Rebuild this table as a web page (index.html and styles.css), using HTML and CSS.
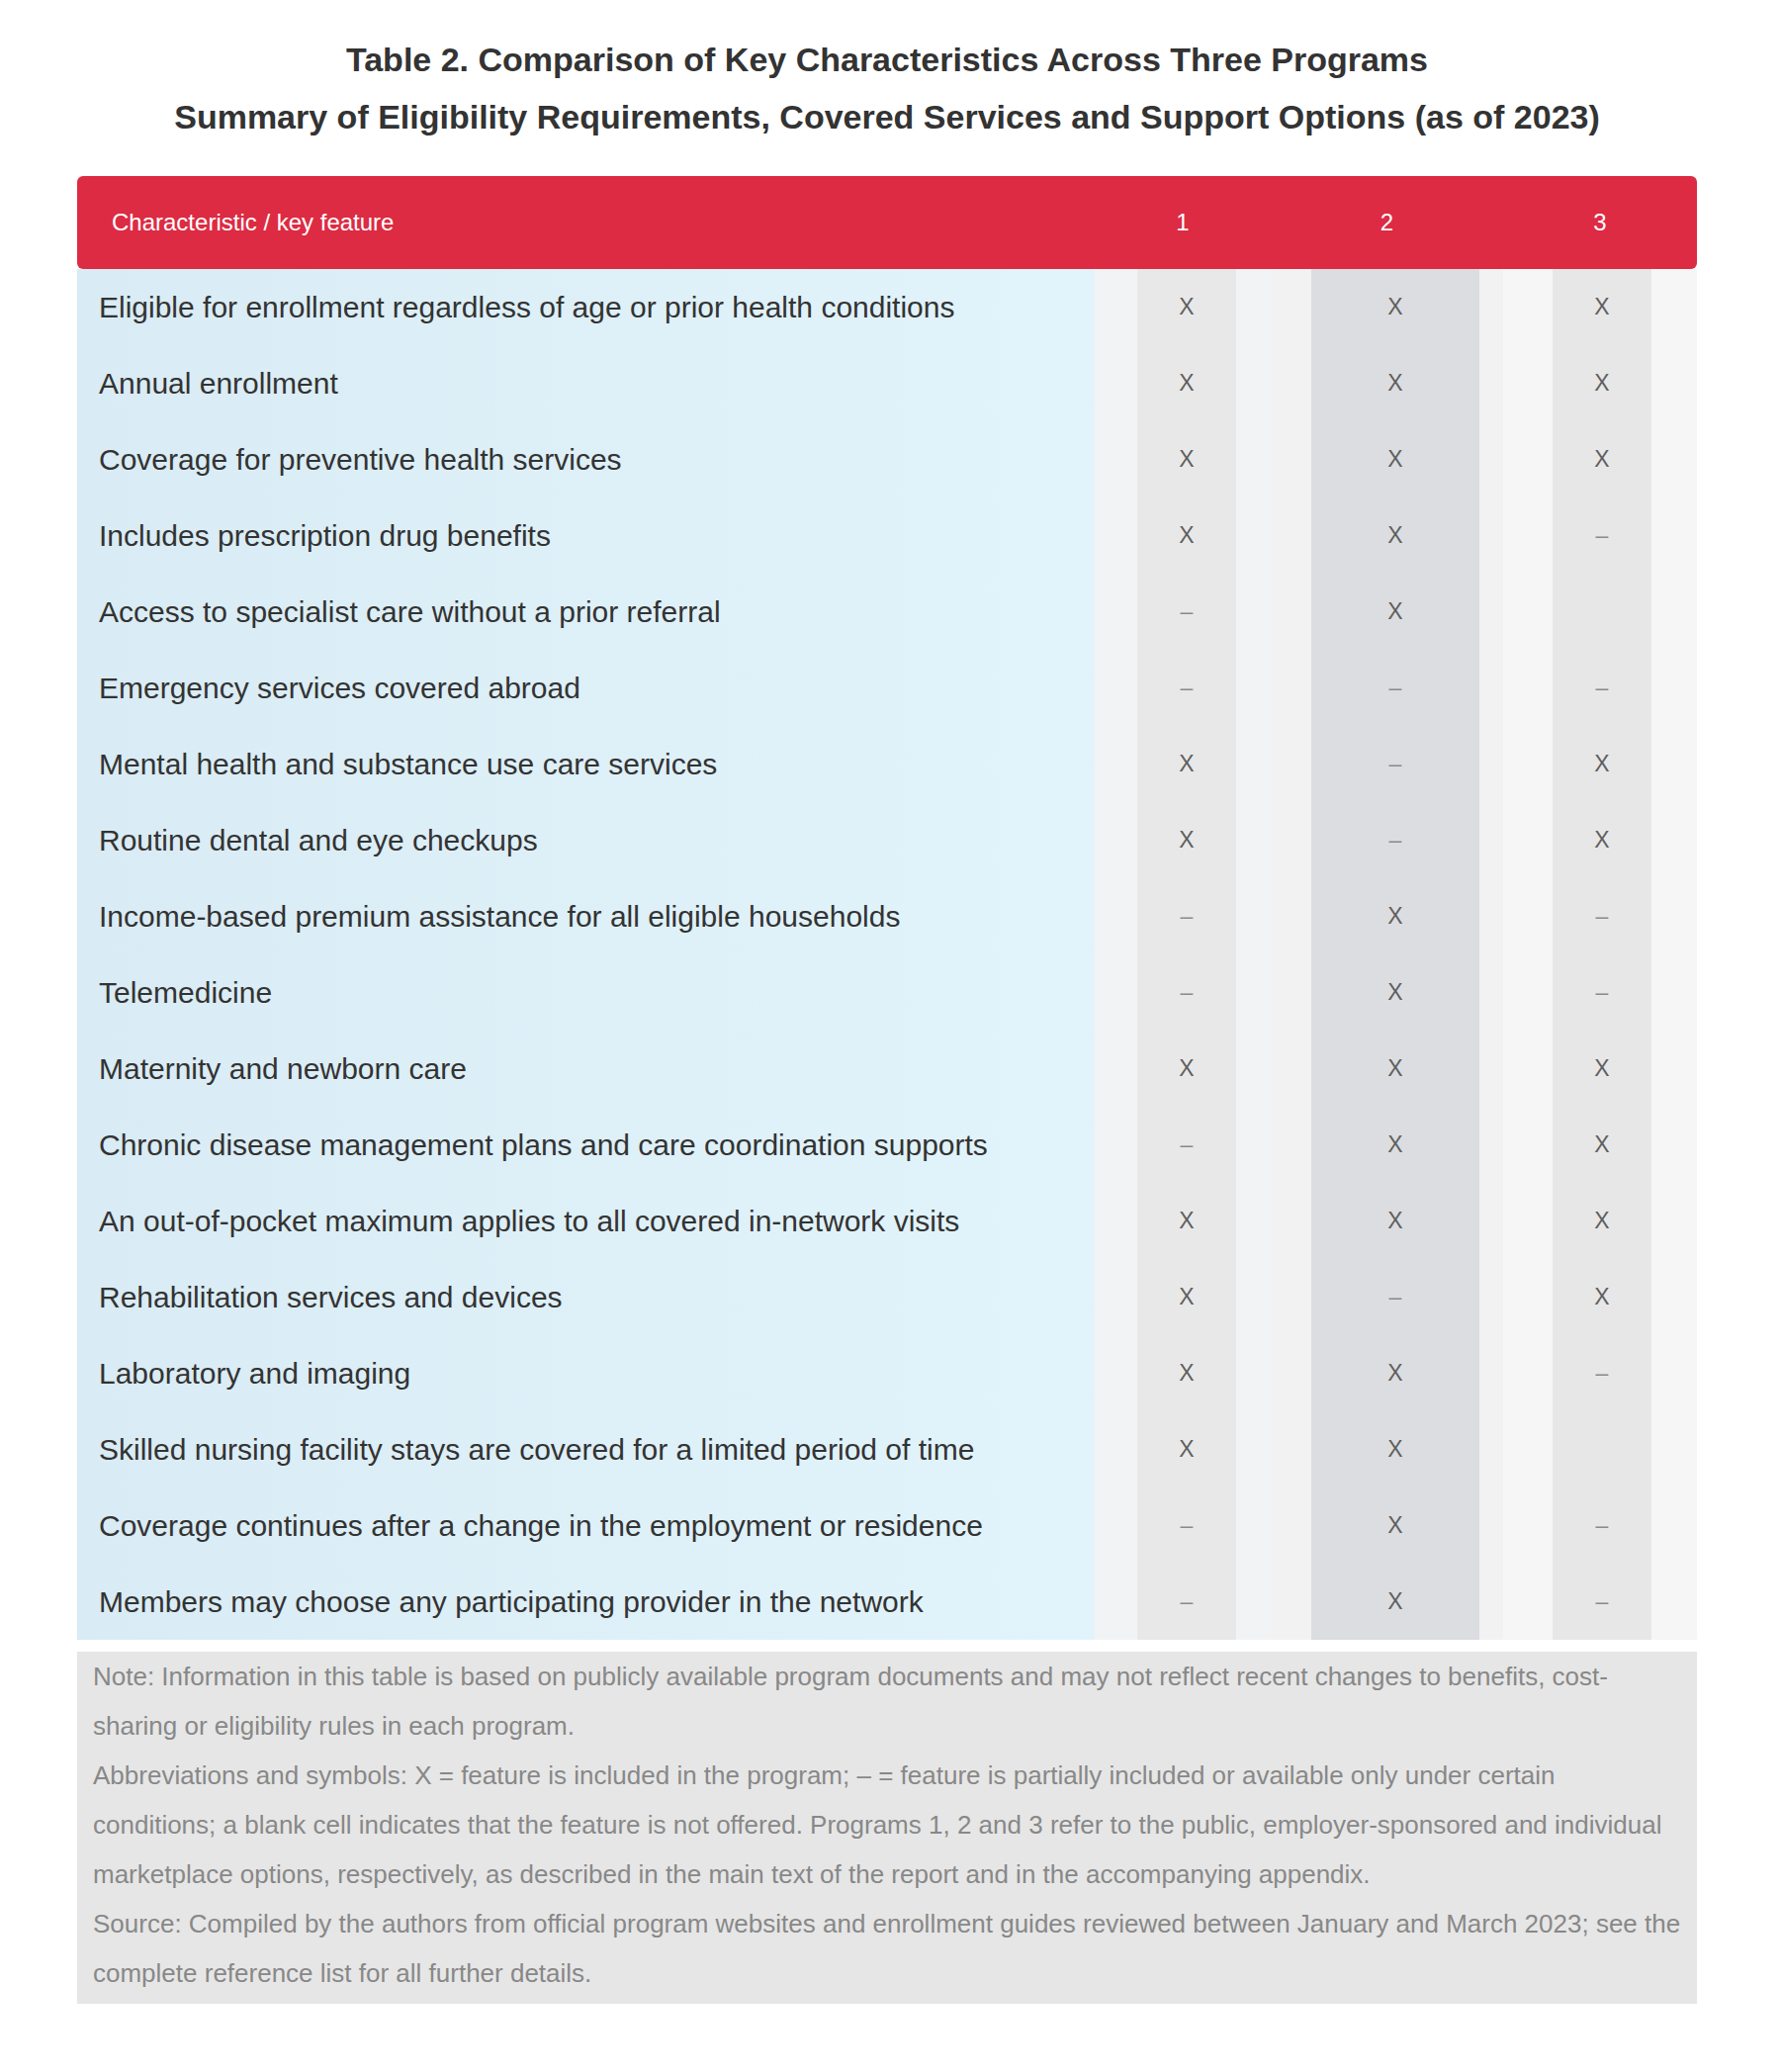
FILE: index.html
```html
<!DOCTYPE html>
<html lang="en">
<head>
<meta charset="utf-8">
<title>Comparison table</title>
<link rel="stylesheet" href="styles.css">
</head>
<body>
<div class="page">
  <h1 class="title">
    <span class="title-line">Table 2. Comparison of Key Characteristics Across Three Programs</span>
    <span class="title-line">Summary of Eligibility Requirements, Covered Services and Support Options (as of 2023)</span>
  </h1>
  <table class="grid">
    <colgroup>
      <col class="c-name"><col class="c-a"><col class="c-b"><col class="c-c">
    </colgroup>
    <thead>
      <tr>
        <th class="h-name">Characteristic / key feature</th>
        <th class="h-val">1</th>
        <th class="h-val">2</th>
        <th class="h-val h-last">3</th>
      </tr>
    </thead>
    <tbody>
      <tr><td class="name">Eligible for enrollment regardless of age or prior health conditions</td><td class="v a">X</td><td class="v b">X</td><td class="v c">X</td></tr>
      <tr><td class="name">Annual enrollment</td><td class="v a">X</td><td class="v b">X</td><td class="v c">X</td></tr>
      <tr><td class="name">Coverage for preventive health services</td><td class="v a">X</td><td class="v b">X</td><td class="v c">X</td></tr>
      <tr><td class="name">Includes prescription drug benefits</td><td class="v a">X</td><td class="v b">X</td><td class="v c soft">–</td></tr>
      <tr><td class="name">Access to specialist care without a prior referral</td><td class="v a soft">–</td><td class="v b">X</td><td class="v c"></td></tr>
      <tr><td class="name">Emergency services covered abroad</td><td class="v a soft">–</td><td class="v b soft">–</td><td class="v c soft">–</td></tr>
      <tr><td class="name">Mental health and substance use care services</td><td class="v a">X</td><td class="v b soft">–</td><td class="v c">X</td></tr>
      <tr><td class="name">Routine dental and eye checkups</td><td class="v a">X</td><td class="v b soft">–</td><td class="v c">X</td></tr>
      <tr><td class="name">Income-based premium assistance for all eligible households</td><td class="v a soft">–</td><td class="v b">X</td><td class="v c soft">–</td></tr>
      <tr><td class="name">Telemedicine</td><td class="v a soft">–</td><td class="v b">X</td><td class="v c soft">–</td></tr>
      <tr><td class="name">Maternity and newborn care</td><td class="v a">X</td><td class="v b">X</td><td class="v c">X</td></tr>
      <tr><td class="name">Chronic disease management plans and care coordination supports</td><td class="v a soft">–</td><td class="v b">X</td><td class="v c">X</td></tr>
      <tr><td class="name">An out-of-pocket maximum applies to all covered in-network visits</td><td class="v a">X</td><td class="v b">X</td><td class="v c">X</td></tr>
      <tr><td class="name">Rehabilitation services and devices</td><td class="v a">X</td><td class="v b soft">–</td><td class="v c">X</td></tr>
      <tr><td class="name">Laboratory and imaging</td><td class="v a">X</td><td class="v b">X</td><td class="v c soft">–</td></tr>
      <tr><td class="name">Skilled nursing facility stays are covered for a limited period of time</td><td class="v a">X</td><td class="v b">X</td><td class="v c"></td></tr>
      <tr><td class="name">Coverage continues after a change in the employment or residence</td><td class="v a soft">–</td><td class="v b">X</td><td class="v c soft">–</td></tr>
      <tr><td class="name">Members may choose any participating provider in the network</td><td class="v a soft">–</td><td class="v b">X</td><td class="v c soft">–</td></tr>
    </tbody>
  </table>
  <div class="notes">
    <p>Note: Information in this table is based on publicly available program documents and may not reflect recent changes to benefits, cost-sharing or eligibility rules in each program.</p>
    <p>Abbreviations and symbols: X = feature is included in the program; – = feature is partially included or available only under certain conditions; a blank cell indicates that the feature is not offered. Programs 1, 2 and 3 refer to the public, employer-sponsored and individual marketplace options, respectively, as described in the main text of the report and in the accompanying appendix.</p>
    <p>Source: Compiled by the authors from official program websites and enrollment guides reviewed between January and March 2023; see the complete reference list for all further details.</p>
  </div>
</div>
</body>
</html>
```
FILE: styles.css
```css
html, body {
  margin: 0;
  padding: 0;
  background: #ffffff;
}

body {
  font-family: "Liberation Sans", Arial, sans-serif;
  color: #333333;
}

.page {
  width: 1638px;
  padding: 31px 0 0 78px;
}

.title {
  margin: 0 0 31px 0;
  font-size: 34px;
  font-weight: 700;
  line-height: 58px;
  color: #333333;
  text-align: center;
}

.title-line {
  display: block;
}

.grid {
  width: 1638px;
  border-collapse: separate;
  border-spacing: 0;
  table-layout: fixed;
}

.c-name { width: 1029px; }
.c-a { width: 178px; }
.c-b { width: 235px; }
.c-c { width: 196px; }

.grid thead th {
  height: 94px;
  padding: 0;
  background: #dc2b43;
  color: #ffffff;
  font-size: 24px;
  font-weight: 400;
  vertical-align: middle;
}

.grid thead th.h-name {
  text-align: left;
  padding-left: 35px;
  border-radius: 6px 0 0 6px;
}

.h-val {
  text-align: center;
}

.h-last {
  border-radius: 0 6px 6px 0;
}

.grid tbody td {
  height: 77px;
  padding: 0;
  vertical-align: middle;
}

.grid tbody td.name {
  background: linear-gradient(to right, #d9ebf4, #e2f4fb);
  padding-left: 22px;
  font-size: 30px;
  color: #333333;
  white-space: nowrap;
  overflow: hidden;
}

.v {
  text-align: center;
  font-size: 23px;
  color: #5f5f5f;
}

.grid tbody td.a {
  padding-left: 43px;
  padding-right: 35px;
  background: linear-gradient(#e8e8e8, #e8e8e8) content-box, #f2f3f4;
}

.grid tbody td.b {
  padding-left: 41px;
  padding-right: 24px;
  background: linear-gradient(#dcdde0, #dcdde0) content-box, #f2f2f2;
}

.grid tbody td.c {
  padding-left: 50px;
  padding-right: 46px;
  background: linear-gradient(#e7e7e7, #e7e7e7) content-box, #f6f6f6;
}

.v.soft {
  color: #8a8a8a;
}

.notes {
  margin-top: 12px;
  width: 1638px;
  box-sizing: border-box;
  padding: 0 14px 6px 16px;
  background: #e6e6e6;
  font-size: 26px;
  line-height: 50px;
  color: #888888;
}

.notes p {
  margin: 0;
}
```
